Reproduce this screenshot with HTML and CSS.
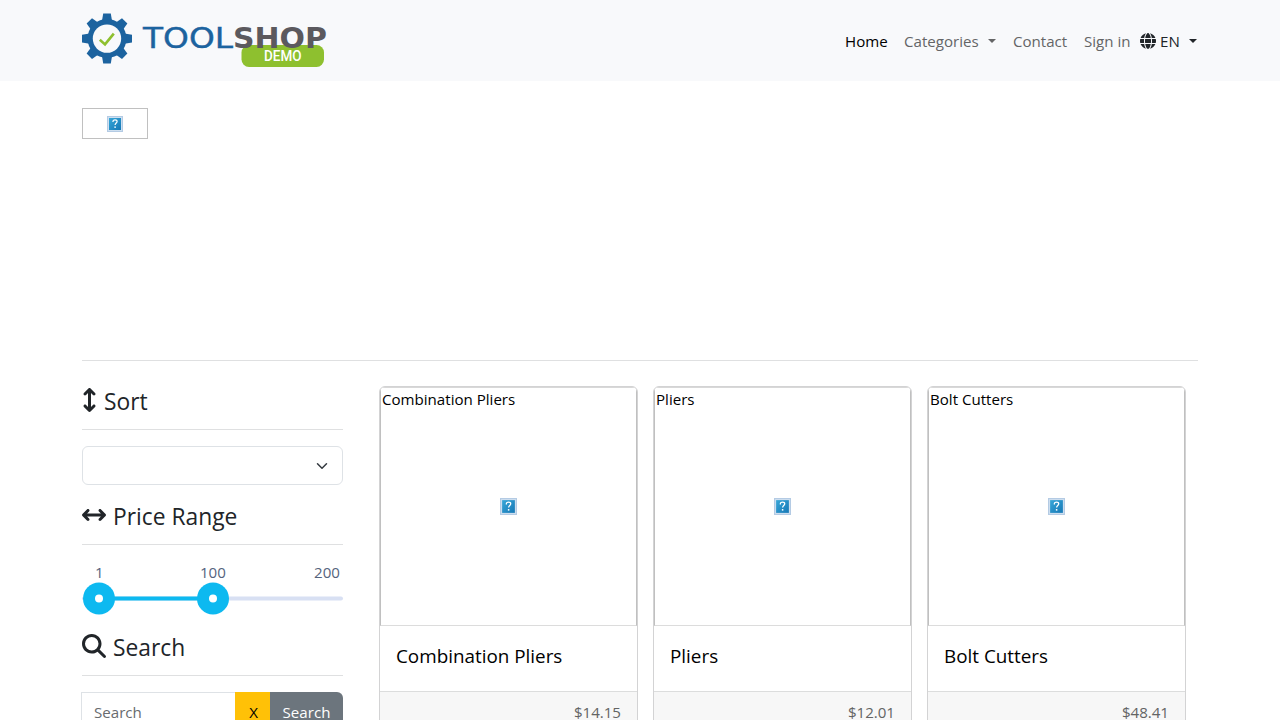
FILE: index.html
```html
<!DOCTYPE html>
<html lang="en">
<head>
<meta charset="utf-8">
<title>Toolshop</title>
<link rel="stylesheet" href="styles.css">
</head>
<body>
<svg class="defs" width="0" height="0">
  <defs>
    <linearGradient id="tile" x1="0" y1="0" x2="1" y2="1"><stop offset="0" stop-color="#38a7d8"/><stop offset="1" stop-color="#1678b6"/></linearGradient>
    <symbol id="missing" viewBox="0 0 16 16">
      <rect width="16" height="16" fill="#b4cbe4"/><rect x="1" y="1" width="14" height="14" fill="#cfe0f0"/>
      <rect x="2" y="2" width="12" height="12" fill="url(#tile)"/>
      <path d="M6 6V5.200C6 4.200 6.800 3.900 8 3.900s2.100.6 2.100 1.600C10.100 7 8.100 7 8.100 9" fill="none" stroke="#fff" stroke-width="1.200"/>
      <rect x="7.400" y="10.400" width="1.400" height="1.500" fill="#fff"/>
    </symbol>
    <path id="arrows" d="M182.6 9.4c-12.5-12.5-32.8-12.5-45.3 0l-96 96c-12.5 12.5-12.5 32.8 0 45.3s32.8 12.5 45.3 0L128 109.3V402.700L86.6 361.4c-12.5-12.5-32.8-12.5-45.3 0s-12.5 32.8 0 45.3l96 96c12.5 12.5 32.8 12.5 45.3 0l96-96c12.5-12.5 12.5-32.8 0-45.3s-32.8-12.5-45.3 0L192 402.700V109.300l41.4 41.4c12.5 12.5 32.8 12.5 45.3 0s12.5-32.8 0-45.3l-96-96z"/>
  </defs>
</svg>
<nav class="navbar">
  <div class="container navbar-inner">
    <svg class="logo" viewBox="0 0 246 56" width="246" height="56">
      <g fill="#1c639f" transform="translate(25 25.600)">
        <path id="tooth" d="M-5.300-16L-3.800-25H3.800L5.300-16z"/>
        <use href="#tooth" transform="rotate(45)"/><use href="#tooth" transform="rotate(90)"/><use href="#tooth" transform="rotate(135)"/><use href="#tooth" transform="rotate(180)"/><use href="#tooth" transform="rotate(225)"/><use href="#tooth" transform="rotate(270)"/><use href="#tooth" transform="rotate(315)"/>
        <circle r="19.500"/><circle r="14.200" fill="#f8f9fb"/>
        <path d="M-7.200 1.200L-2 5.800 6.800-5" fill="none" stroke="#8ec02f" stroke-width="2.600"/>
      </g>
      <rect x="159.500" y="32" width="82.500" height="22" rx="7.500" fill="#8ec02f"/>
      <text class="logo-tool" x="61" y="35" textLength="90" lengthAdjust="spacingAndGlyphs">TOOL</text>
      <text class="logo-shop" x="151" y="35" textLength="94" lengthAdjust="spacingAndGlyphs">SHOP</text>
      <text class="logo-demo" x="182" y="47.700" textLength="37.500" lengthAdjust="spacingAndGlyphs">DEMO</text>
    </svg>
    <ul class="menu">
      <li class="item home"><span>Home</span></li>
      <li class="item categories"><span>Categories</span><i class="caret"></i></li>
      <li class="item contact"><span>Contact</span></li>
      <li class="item signin"><span>Sign in</span></li>
      <li class="item lang"><svg width="16" height="16" viewBox="0 0 512 512" fill="currentColor"><path d="M352 256c0 22.2-1.2 43.6-3.3 64H163.3c-2.2-20.4-3.3-41.8-3.3-64s1.2-43.6 3.3-64H348.7c2.2 20.4 3.3 41.8 3.3 64zm28.8-64H503.9c5.3 20.5 8.1 41.9 8.1 64s-2.8 43.5-8.1 64H380.8c2.1-20.6 3.2-42 3.2-64s-1.1-43.4-3.2-64zm112.6-32H376.7c-10-63.9-29.8-117.4-55.3-151.6c78.3 20.7 142 77.5 171.9 151.6zm-149.1 0H167.7c6.1-36.4 15.5-68.6 27-94.7c10.5-23.6 22.2-40.7 33.5-51.5C239.4 3.2 248.7 0 256 0s16.6 3.2 27.8 13.8c11.3 10.8 23 27.900 33.5 51.5c11.6 26 20.9 58.2 27 94.7zm-209 0H18.6C48.6 85.9 112.2 29.1 190.6 8.4C165.1 42.6 145.3 96.1 135.3 160zM8.1 192H131.2c-2.1 20.6-3.2 42-3.2 64s1.1 43.4 3.2 64H8.1C2.8 299.5 0 278.1 0 256s2.8-43.5 8.1-64zM194.700 446.600c-11.6-26-20.9-58.2-27-94.6H344.3c-6.1 36.4-15.5 68.6-27 94.6c-10.5 23.6-22.2 40.7-33.5 51.5C272.6 508.8 263.3 512 256 512s-16.6-3.2-27.8-13.8c-11.3-10.8-23-27.9-33.5-51.5zM135.3 352c10 63.9 29.8 117.4 55.3 151.6C112.2 482.9 48.6 426.1 18.6 352H135.3zm358.1 0c-30 74.1-93.6 130.9-171.9 151.6c25.5-34.2 45.2-87.7 55.3-151.6H493.4z"/></svg><span>EN</span><i class="caret"></i></li>
    </ul>
  </div>
</nav>
<main class="container">
  <div class="banner"><div class="banner-image"><svg width="16" height="16"><use href="#missing"/></svg></div></div>
  <div class="columns">
    <aside class="filters">
      <h4 class="title title-sort"><svg width="15" height="24" viewBox="0 0 320 512"><use href="#arrows"/></svg><span>Sort</span></h4>
      <div class="select"><svg width="12" height="12" viewBox="0 0 16 16"><path d="m2 5 6 6 6-6" fill="none" stroke="#343a40" stroke-width="2" stroke-linecap="round" stroke-linejoin="round"/></svg></div>
      <h4 class="title title-price"><svg width="24" height="24" viewBox="0 0 512 512"><use href="#arrows" transform="rotate(90 256 256) translate(96 0)"/></svg><span>Price Range</span></h4>
      <div class="slider">
        <div class="values"><span>1</span><span>100</span><span>200</span></div>
        <svg class="track" width="261" height="32"><rect y="13.500" width="261" height="4" rx="2" fill="#d8e0f3"/><rect x="17" y="13.500" width="114" height="4" fill="#0db9f0"/><circle cx="17" cy="15.500" r="16" fill="#0db9f0"/><circle cx="17" cy="15.500" r="4" fill="#fff"/><circle cx="131" cy="15.500" r="16" fill="#0db9f0"/><circle cx="131" cy="15.500" r="4" fill="#fff"/></svg>
      </div>
      <h4 class="title title-search"><svg width="24" height="24" viewBox="0 0 512 512"><path d="M416 208c0 45.9-14.9 88.3-40 122.7L502.6 457.4c12.5 12.5 12.5 32.8 0 45.3s-32.8 12.5-45.3 0L330.7 376c-34.4 25.2-76.8 40-122.7 40C93.1 416 0 322.9 0 208S93.1 0 208 0S416 93.1 416 208zM208 352a144 144 0 1 0 0-288 144 144 0 1 0 0 288z"/></svg><span>Search</span></h4>
      <div class="search"><div class="search-input">Search</div><div class="search-clear">X</div><div class="search-submit">Search</div></div>
    </aside>
    <section class="products">
      <article class="card"><div class="photo"><span class="alt">Combination Pliers</span><svg width="17" height="17"><use href="#missing"/></svg></div><h5 class="name">Combination Pliers</h5><div class="price">$14.15</div></article>
      <article class="card"><div class="photo"><span class="alt">Pliers</span><svg width="17" height="17"><use href="#missing"/></svg></div><h5 class="name">Pliers</h5><div class="price">$12.01</div></article>
      <article class="card"><div class="photo"><span class="alt">Bolt Cutters</span><svg width="17" height="17"><use href="#missing"/></svg></div><h5 class="name">Bolt Cutters</h5><div class="price">$48.41</div></article>
    </section>
  </div>
</main>
</body>
</html>
```
FILE: styles.css
```css
* { box-sizing: border-box; }
html, body { height: 720px; overflow: hidden; }
body { margin: 0; background: #fff; color: #212529; font: 400 15.1px/24px "Open Sans", "Noto Sans", sans-serif; }
svg { display: block; flex: none; }
.defs { position: absolute; }
.container { width: 1116px; margin: 0 auto; }
.navbar { height: 81px; background: #f8f9fb; }
.navbar-inner { display: flex; justify-content: space-between; padding-top: 13px; }
.logo-tool, .logo-shop { font-family: "DejaVu Sans", sans-serif; font-size: 28px; font-weight: 400; }
.logo-tool { fill: #1c639f; stroke: #1c639f; stroke-width: .4px; }
.logo-shop { fill: #5b595e; font-weight: bold; }
.logo-demo { fill: #fff; font: 500 14px Roboto, sans-serif; }
.menu { display: flex; list-style: none; margin: 0; padding: 16px 0 0; color: #646566; }
.item { display: flex; align-items: center; height: 24px; white-space: nowrap; }
.home { width: 59px; color: #000; }
.categories { width: 109px; }
.categories span { width: 76px; }
.contact { width: 71px; }
.signin { width: 56px; }
.lang { width: 58px; color: #212529; }
.lang span { width: 21px; margin-left: 4px; }
.caret { margin-left: 8px; border: 4.8px solid transparent; border-top-color: currentColor; border-bottom: 0; }
.banner { height: 280px; padding-top: 27px; border-bottom: 1px solid #dfe0e1; }
.banner-image { display: flex; align-items: center; justify-content: center; width: 66px; height: 31px; border: 1px solid #c0c0c0; }
.columns { display: flex; padding-top: 25px; gap: 36px; }
.filters { width: 261px; flex: none; }
.title { display: flex; margin: 0; border-bottom: 1px solid #dfe0e1; font-size: 22.8px; font-weight: 400; line-height: 28px; }
.title svg { fill: #212529; }
.title span { margin-left: 7px; }
.title-sort { height: 44px; padding-top: 2px; }
.title-price { height: 45px; margin-top: 15px; padding-top: 3px; }
.title-search { height: 44px; margin-top: 17px; padding-top: 2px; }
.select { display: flex; align-items: center; justify-content: flex-end; height: 39px; margin-top: 16px; padding-right: 14px; border: 1px solid #dee2e6; border-radius: 6px; }
.slider { padding-top: 15px; color: #55637d; }
.track { overflow: visible; }
.values { display: flex; justify-content: space-between; height: 23px; padding: 0 3px 0 13px; }
.values span:nth-child(2) { margin-left: 8px; }
.search { display: flex; height: 38px; margin: 16px 0 0 -1px; line-height: 40px; }
.search-input { width: 154px; padding-left: 12px; border: 1px solid #dee2e6; border-right: 0; color: #686b6e; line-height: 38px; }
.search-clear { width: 35px; padding-left: 2px; background: #ffc107; color: #000; text-align: center; }
.search-submit { flex: 1; background: #6c757d; color: #fff; text-align: center; border-radius: 0 6px 6px 0; }
.products { display: flex; gap: 15px; }
.card { width: 259px; height: 400px; border: 1px solid #d3d3d4; border-radius: 6px; overflow: hidden; }
.photo { position: relative; display: flex; align-items: center; justify-content: center; height: 239px; border: 1px solid #c0c0c0; border-top-color: #d8d8d8; border-bottom-color: #dcdcdc; }
.alt { position: absolute; left: 1px; top: -1px; color: #000; }
.name { height: 65px; margin: 0; padding: 16px 16px 0; color: #000; font-size: 18.85px; font-weight: 400; line-height: 28px; }
.price { height: 50px; padding: 8px 16px; border-top: 1px solid #dcdddd; background: #f7f7f7; color: #636464; text-align: right; }
```
